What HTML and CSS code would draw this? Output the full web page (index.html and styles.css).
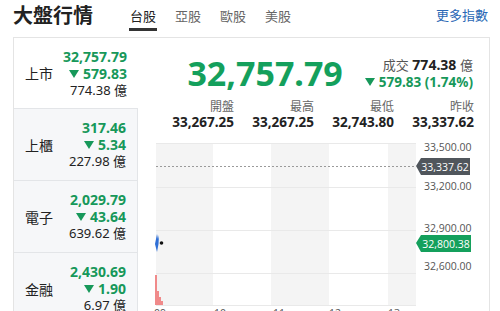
FILE: index.html
```html
<!DOCTYPE html>
<html>
<head lang="zh-Hant">
    <meta charset="UTF-8">
    <title>大盤行情</title>
    <link rel="stylesheet" href="styles.css">
</head>
<body>
    <div id="page">
        <div class="head">
            <h1 class="title">大盤行情</h1>
            <ul class="tabs">
                <li class="selected">台股</li>
                <li>亞股</li>
                <li>歐股</li>
                <li>美股</li>
            </ul>
            <a class="more" href="#">更多指數</a>
        </div>

        <div class="board">
            <ul class="side">
                <li class="item selected">
                    <span class="name">上市</span>
                    <span class="vals">
                        <b>32,757.79</b>
                        <b><i class="down"></i>579.83</b>
                        <span>774.38 億</span>
                    </span>
                </li>
                <li class="item">
                    <span class="name">上櫃</span>
                    <span class="vals">
                        <b>317.46</b>
                        <b><i class="down"></i>5.34</b>
                        <span>227.98 億</span>
                    </span>
                </li>
                <li class="item">
                    <span class="name">電子</span>
                    <span class="vals">
                        <b>2,029.79</b>
                        <b><i class="down"></i>43.64</b>
                        <span>639.62 億</span>
                    </span>
                </li>
                <li class="item">
                    <span class="name">金融</span>
                    <span class="vals">
                        <b>2,430.69</b>
                        <b><i class="down"></i>1.90</b>
                        <span>6.97 億</span>
                    </span>
                </li>
            </ul>

            <div class="main">
                <div class="quote">
                    <div class="price">32,757.79</div>
                    <div class="change">
                        <div class="vol"><span class="lbl">成交</span> <b>774.38</b> <span class="lbl">億</span></div>
                        <div class="diff"><i class="down"></i>579.83 (1.74%)</div>
                    </div>
                </div>
                <dl class="stats">
                    <div><dt>開盤</dt><dd>33,267.25</dd></div>
                    <div><dt>最高</dt><dd>33,267.25</dd></div>
                    <div><dt>最低</dt><dd>32,743.80</dd></div>
                    <div><dt>昨收</dt><dd>33,337.62</dd></div>
                </dl>

                <svg class="chart" width="352" height="190" viewBox="0 0 352 190">
                    <!-- 時段底色 -->
                    <rect x="18" y="12" width="57" height="162" fill="#f4f4f4"/>
                    <rect x="133" y="12" width="58" height="162" fill="#f4f4f4"/>
                    <rect x="250" y="12" width="28" height="162" fill="#f4f4f4"/>
                    <g stroke="#e9e9e9" stroke-width="1">
                        <line x1="18" y1="12.5" x2="278" y2="12.5"/>
                        <line x1="18" y1="56.5" x2="278" y2="56.5"/>
                        <line x1="18" y1="99.5" x2="278" y2="99.5"/>
                        <line x1="18" y1="142.5" x2="278" y2="142.5"/>
                        <line x1="18" y1="174.5" x2="278" y2="174.5"/>
                    </g>
                    <line x1="18" y1="35.5" x2="278" y2="35.5" stroke="#9a9a9a" stroke-dasharray="2,2"/>

                    <!-- 量 -->
                    <g fill="#f08a8a">
                        <rect x="17" y="144" width="2" height="30"/>
                        <rect x="19" y="160" width="2" height="14"/>
                        <rect x="21" y="166" width="2" height="8"/>
                        <rect x="23" y="170" width="2" height="4"/>
                    </g>
                    <!-- 價 -->
                    <path d="M17,113 L19,103 L20,108 L21,104 L20.5,113 L19,121 Z" fill="#2f6fd6"/>
                    <circle cx="23.5" cy="112" r="1.8" fill="#111"/>

                    <g class="axis">
                        <text x="286" y="20">33,500.00</text>
                        <text x="286" y="59">33,200.00</text>
                        <text x="286" y="101">32,900.00</text>
                        <text x="286" y="139">32,600.00</text>
                    </g>

                    <polygon points="278,35 283,27 332,27 332,44 283,44" fill="#50565c"/>
                    <text class="tag" x="307" y="39.5">33,337.62</text>
                    <polygon points="278,112 283,104 333,104 333,121 283,121" fill="#14a05c"/>
                    <text class="tag" x="308" y="116.5">32,800.38</text>

                    <g class="axis">
                        <text x="16" y="186">09</text>
                        <text x="76" y="186">10</text>
                        <text x="135" y="186">11</text>
                        <text x="191" y="186">12</text>
                        <text x="250" y="186">13</text>
                    </g>
                </svg>
            </div>
        </div>
    </div>
</body>
</html>
```

FILE: styles.css
```css
*{
    margin: 0;
    padding: 0;
}
ul{
    list-style: none;
}
a{
    text-decoration: none;
}
i{
    font-style: normal;
}
body{
    font-family: "Noto Sans", "Noto Sans CJK TC", sans-serif;
    color: #222;
    background: #fff;
    overflow: hidden;
}
#page{
    margin: 0 10px 0 13px;
}
.head{
    display: flex;
    align-items: flex-end;
    height: 37px;
    box-sizing: border-box;
    padding-bottom: 6px;
}
.title{
    font-size: 20px;
    font-weight: bold;
    line-height: 26px;
    margin-bottom: 3px;
    font-family: "Noto Sans CJK TC", sans-serif;
}
.tabs{
    display: flex;
    margin-left: 36px;
}
.tabs li{
    font-size: 13px;
    line-height: 20px;
    color: #666;
    padding: 0 1px 2px;
    margin-right: 17px;
    border-bottom: 3px solid transparent;
    font-family: "Noto Sans CJK TC", sans-serif;
}
.tabs .selected{
    color: #222;
    border-bottom-color: #333;
}
.more{
    margin-left: auto;
    margin-right: 2px;
    margin-bottom: 6px;
    font-size: 13px;
    line-height: 20px;
    color: #2a68b5;
    font-family: "Noto Sans CJK TC", sans-serif;
}
.board{
    display: flex;
    border: 1px solid #e4e4e4;
    border-bottom: 0;
    height: 290px;
}
.side{
    width: 124px;
    flex-shrink: 0;
}
.item{
    display: flex;
    align-items: center;
    justify-content: space-between;
    height: 72px;
    box-sizing: border-box;
    padding: 0 11px;
    background: #f6f7f9;
    border-top: 1px solid #e3e5e8;
    border-right: 1px solid #e3e5e8;
}
.item.selected{
    height: 70px;
    background: #fff;
    border: 0;
}
.name{
    font-size: 14px;
    font-family: "Noto Sans CJK TC", sans-serif;
}
.vals{
    display: flex;
    flex-direction: column;
    align-items: flex-end;
    line-height: 17px;
}
.vals b{
    font-size: 14px;
    color: #17985a;
}
.vals span{
    font-size: 13px;
}
.down{
    display: inline-block;
    width: 0;
    height: 0;
    border-left: 5px solid transparent;
    border-right: 5px solid transparent;
    border-top: 8px solid #17985a;
    margin-right: 4px;
    vertical-align: 1px;
}
.main{
    flex: 1;
    display: flex;
    flex-direction: column;
}
.quote{
    display: flex;
    justify-content: flex-end;
    align-items: center;
    gap: 22px;
    padding: 15px 17px 0 0;
}
.price{
    font-size: 34px;
    font-weight: bold;
    line-height: 40px;
    color: #14a05c;
}
.change{
    text-align: right;
    line-height: 17px;
}
.vol{
    font-size: 14px;
}
.vol .lbl{
    color: #555;
    font-size: 13px;
}
.diff{
    font-size: 13.5px;
    font-weight: bold;
    color: #17985a;
}
.stats{
    display: grid;
    grid-template-columns: repeat(4, 80px);
    margin: 6px 0 0 16px;
    text-align: right;
}
.stats dt{
    font-size: 12px;
    line-height: 15px;
    color: #666;
}
.stats dd{
    font-size: 13.5px;
    line-height: 17px;
    font-weight: bold;
}
.chart{
    display: block;
}
.axis text{
    font-family: "Open Sans", sans-serif;
    font-size: 10.5px;
    fill: #555;
}
.tag{
    font-family: "Open Sans", sans-serif;
    font-size: 10.5px;
    fill: #fff;
    text-anchor: middle;
}
```
